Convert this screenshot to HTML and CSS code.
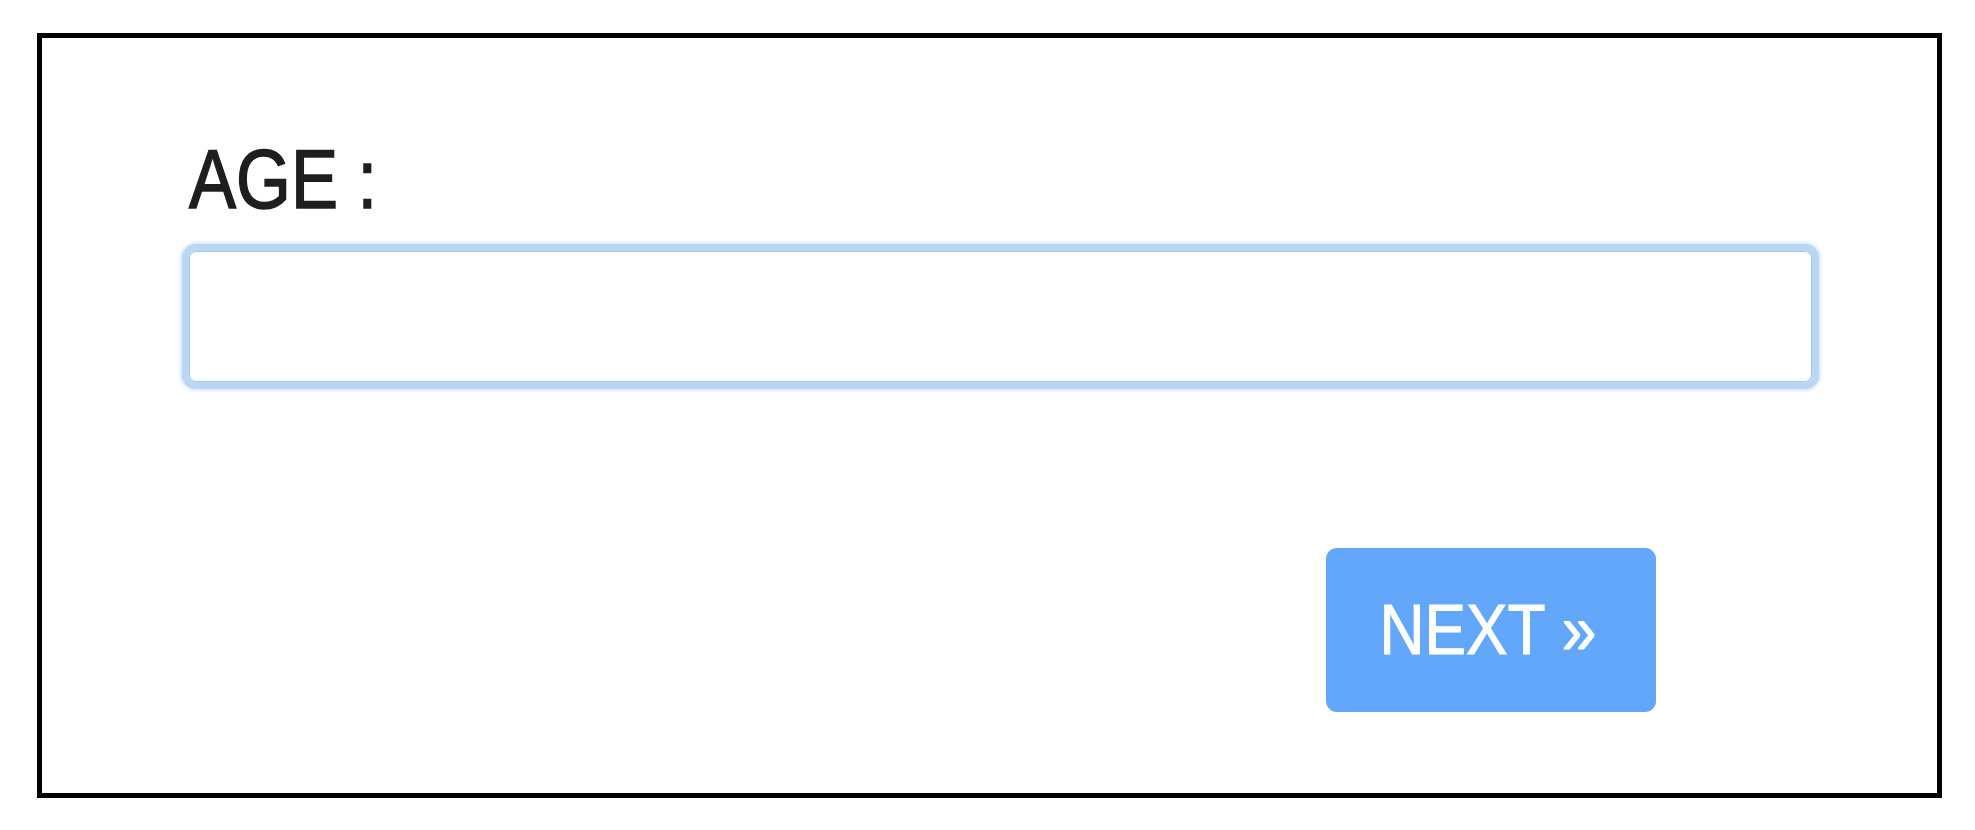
FILE: index.html
```html
<!DOCTYPE html>
<html lang="en">
<head>
<meta charset="utf-8">
<title>Age</title>
<link rel="stylesheet" href="styles.css">
</head>
<body>
<div class="frame">
  <form class="form">
    <label class="label" for="age"><span class="label-text">AGE :</span></label>
    <input class="field" id="age" type="text">
    <button class="next" type="button"><span class="next-text">NEXT »</span></button>
  </form>
</div>
</body>
</html>
```
FILE: styles.css
```css
html, body {
  margin: 0;
  padding: 0;
  background: #ffffff;
}

body {
  font-family: "Liberation Sans", Arial, Helvetica, sans-serif;
}

.frame {
  box-sizing: border-box;
  margin: 33px 0 0 37px;
  width: 1905px;
  height: 765px;
  border: 5px solid #000000;
  background: #ffffff;
}

.form {
  display: flex;
  flex-direction: column;
  padding: 99px 118px 0 140px;
  margin: 0;
}

.label {
  display: block;
  margin-left: 7px;
  height: 84px;
  font-size: 84px;
  line-height: 1;
  color: #1e1e1e;
}

.label-text {
  display: inline-block;
  transform: scaleX(0.84);
  transform-origin: left center;
  -webkit-text-stroke: 1.6px #1e1e1e;
}

.field {
  box-sizing: border-box;
  margin: 23px 0 0 0;
  width: 100%;
  height: 145px;
  border: 7px solid #b9d6f2;
  border-radius: 14px;
  background: #ffffff;
  box-shadow: 0 0 3px 2px rgba(185, 214, 242, 0.55), inset 0 0 0 1px #a5c8ec;
  outline: none;
  padding: 0 20px;
  font-size: 60px;
  font-family: inherit;
}

.next {
  align-self: flex-end;
  box-sizing: border-box;
  margin: 159px 163px 0 0;
  width: 330px;
  height: 164px;
  padding: 0;
  border: none;
  border-radius: 11px;
  background: #63a7fa;
  color: #ffffff;
  font-family: inherit;
  font-size: 70px;
  line-height: 1;
  display: flex;
  align-items: center;
  justify-content: center;
  cursor: pointer;
}

.next-text {
  display: inline-block;
  margin-right: 6px;
  transform: scaleX(0.89);
  -webkit-text-stroke: 1px #ffffff;
}
```
